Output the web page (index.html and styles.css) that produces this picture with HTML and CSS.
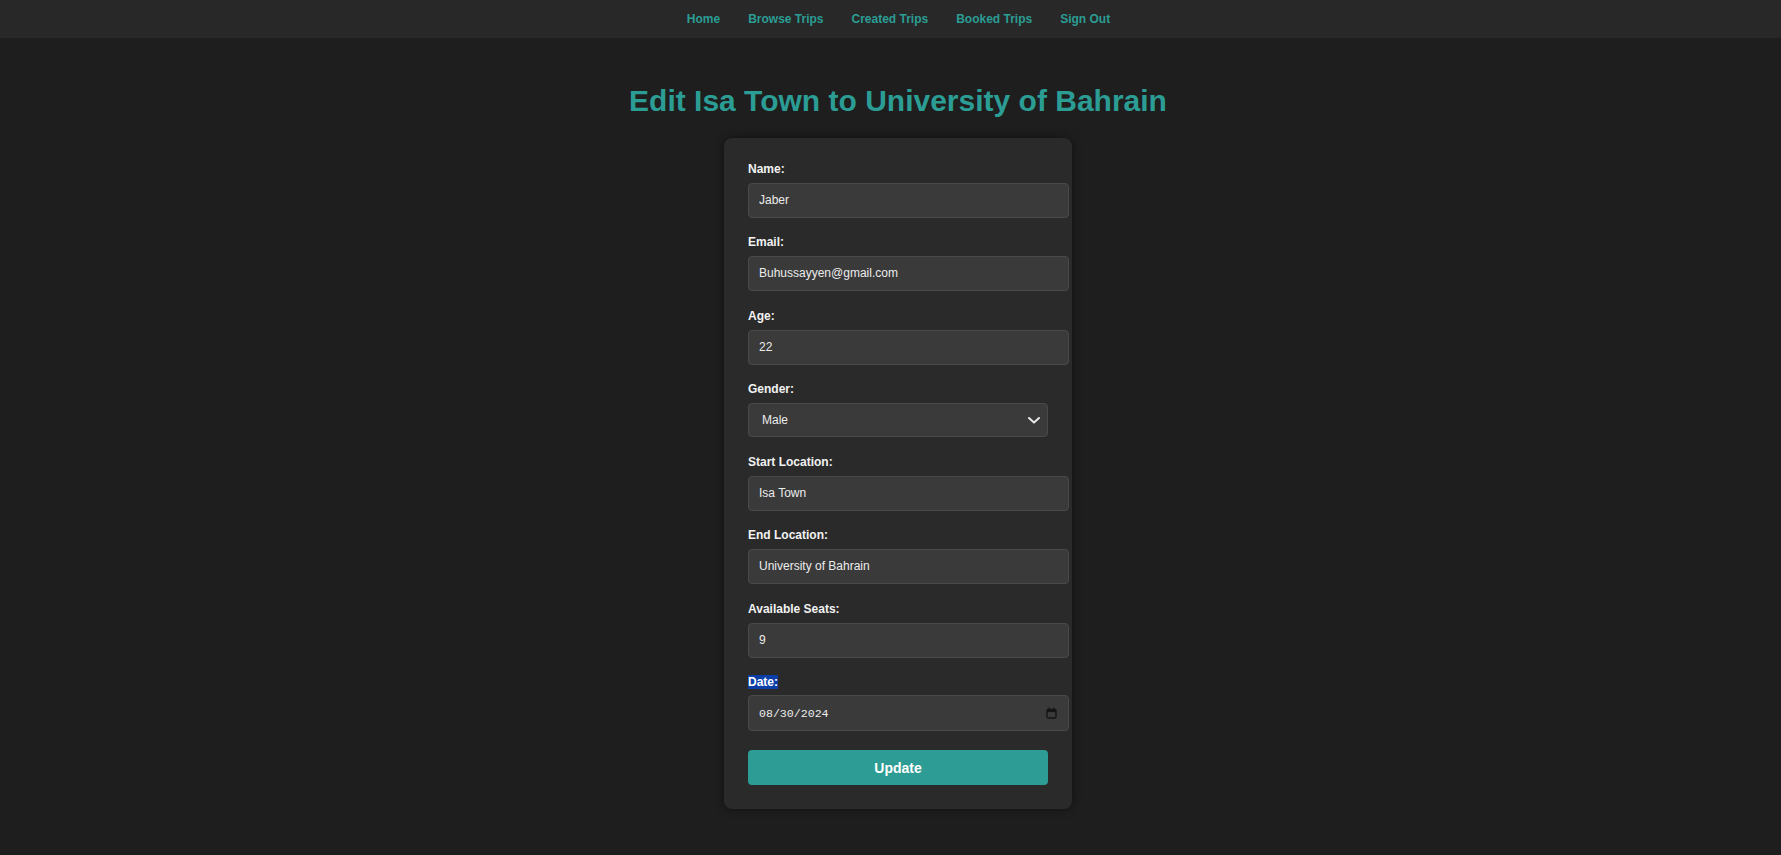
FILE: index.html
```html
<!DOCTYPE html>
<html lang="en">
<head>
<meta charset="utf-8">
<title>Edit Trip</title>
<link rel="stylesheet" href="styles.css">
</head>
<body>
<nav class="topnav">
  <div class="topnav-links">
    <a href="#" class="nav-link">Home</a>
    <a href="#" class="nav-link">Browse Trips</a>
    <a href="#" class="nav-link">Created Trips</a>
    <a href="#" class="nav-link">Booked Trips</a>
    <a href="#" class="nav-link">Sign Out</a>
  </div>
</nav>
<main class="page">
  <h1 class="page-title">Edit Isa Town to University of Bahrain</h1>
  <form class="card">
    <div class="field">
      <label class="field-label" for="name">Name:</label>
      <input class="field-input" id="name" type="text" value="Jaber">
    </div>
    <div class="field">
      <label class="field-label" for="email">Email:</label>
      <input class="field-input" id="email" type="text" value="Buhussayyen@gmail.com">
    </div>
    <div class="field">
      <label class="field-label" for="age">Age:</label>
      <input class="field-input" id="age" type="text" value="22">
    </div>
    <div class="field field-select">
      <label class="field-label" for="gender">Gender:</label>
      <div class="select-wrap">
        <select class="select-input" id="gender">
          <option>Male</option>
          <option>Female</option>
        </select>
        <svg class="select-chevron" width="12" height="7" viewBox="0 0 12 7"><path d="M1 1 L6 5.6 L11 1" fill="none" stroke="#e6e6e6" stroke-width="2" stroke-linecap="round" stroke-linejoin="round"/></svg>
      </div>
    </div>
    <div class="field">
      <label class="field-label" for="start">Start Location:</label>
      <input class="field-input" id="start" type="text" value="Isa Town">
    </div>
    <div class="field">
      <label class="field-label" for="end">End Location:</label>
      <input class="field-input" id="end" type="text" value="University of Bahrain">
    </div>
    <div class="field">
      <label class="field-label" for="seats">Available Seats:</label>
      <input class="field-input" id="seats" type="text" value="9">
    </div>
    <div class="field field-date">
      <label class="field-label" for="date"><span class="selected">Date:</span></label>
      <div class="date-input">
        <span class="date-value">08/30/2024</span>
        <svg class="date-icon" width="11" height="12" viewBox="0 0 11 12"><rect x="1" y="2.5" width="9" height="8.5" rx="1.3" fill="none" stroke="#151515" stroke-width="1.4"/><rect x="1" y="2.5" width="9" height="2.6" fill="#151515"/><rect x="2.6" y="0.6" width="1.4" height="2.5" fill="#151515"/><rect x="7" y="0.6" width="1.4" height="2.5" fill="#151515"/></svg>
      </div>
    </div>
    <button class="submit-btn" type="button">Update</button>
  </form>
</main>
</body>
</html>
```
FILE: styles.css
```css
* {
  box-sizing: content-box;
}
html, body {
  margin: 0;
  padding: 0;
}
body {
  background: #1e1e1e;
  font-family: "Liberation Sans", Arial, sans-serif;
  color: #ececec;
  min-height: 855px;
}
.topnav {
  background: #282828;
  height: 38px;
}
.topnav-links {
  height: 38px;
  display: flex;
  justify-content: center;
  align-items: center;
  gap: 28px;
  padding-left: 16px;
}
.nav-link {
  color: #2b9d94;
  font-size: 12px;
  font-weight: bold;
  text-decoration: none;
  line-height: 14px;
}
.page {
  display: flex;
  flex-direction: column;
  align-items: center;
  padding-left: 15px;
  padding-top: 45px;
}
.page-title {
  margin: 0 0 20px 0;
  font-size: 30px;
  line-height: 35px;
  font-weight: bold;
  color: #2b9d94;
}
.card {
  width: 300px;
  padding: 24px 24px 24px 24px;
  background: #2a2a2a;
  border-radius: 8px;
  box-shadow: 0 0 10px rgba(0, 0, 0, 0.45);
  display: flex;
  flex-direction: column;
}
.field {
  display: flex;
  flex-direction: column;
  margin-bottom: 17.3px;
}
.field-select {
  margin-bottom: 18.3px;
}
.field-date {
  margin-bottom: 19px;
}
.field-label {
  display: block;
  font-size: 12px;
  line-height: 14px;
  font-weight: bold;
  color: #f2f2f2;
  margin-bottom: 7px;
}
.field-date .field-label {
  margin-bottom: 6px;
}
.selected {
  background: #0c3ea8;
  color: #ffffff;
}
.field-input {
  width: 300px;
  height: 15px;
  padding: 9px 9px 9px 10px;
  margin: 0;
  border: 1px solid #4a4a4a;
  border-radius: 4px;
  background: #3a3a3a;
  color: #ececec;
  font-family: "Liberation Sans", Arial, sans-serif;
  font-size: 12px;
  line-height: 15px;
  outline: none;
}
.select-wrap {
  position: relative;
  width: 300px;
}
.select-input {
  -webkit-appearance: none;
  appearance: none;
  display: block;
  box-sizing: border-box;
  width: 300px;
  height: 34px;
  margin: 0;
  padding: 0 30px 0 13px;
  border: 1px solid #4a4a4a;
  border-radius: 4px;
  background: #3a3a3a;
  color: #ececec;
  font-family: "Liberation Sans", Arial, sans-serif;
  font-size: 12px;
  outline: none;
}
.select-chevron {
  position: absolute;
  right: 8px;
  top: 14px;
  pointer-events: none;
}
.date-input {
  width: 300px;
  height: 16px;
  padding: 9px 9px 9px 10px;
  border: 1px solid #4a4a4a;
  border-radius: 4px;
  background: #3a3a3a;
  display: flex;
  align-items: center;
  justify-content: space-between;
}
.date-value {
  font-family: "Liberation Mono", "Courier New", monospace;
  font-size: 11.6px;
  color: #ececec;
}
.date-icon {
  display: block;
  margin-right: 2px;
}
.submit-btn {
  width: 300px;
  height: 35px;
  box-sizing: border-box;
  border: none;
  border-radius: 4px;
  background: #2d9c94;
  color: #ffffff;
  font-family: "Liberation Sans", Arial, sans-serif;
  font-size: 14px;
  font-weight: bold;
  cursor: pointer;
  padding: 0;
}
```
